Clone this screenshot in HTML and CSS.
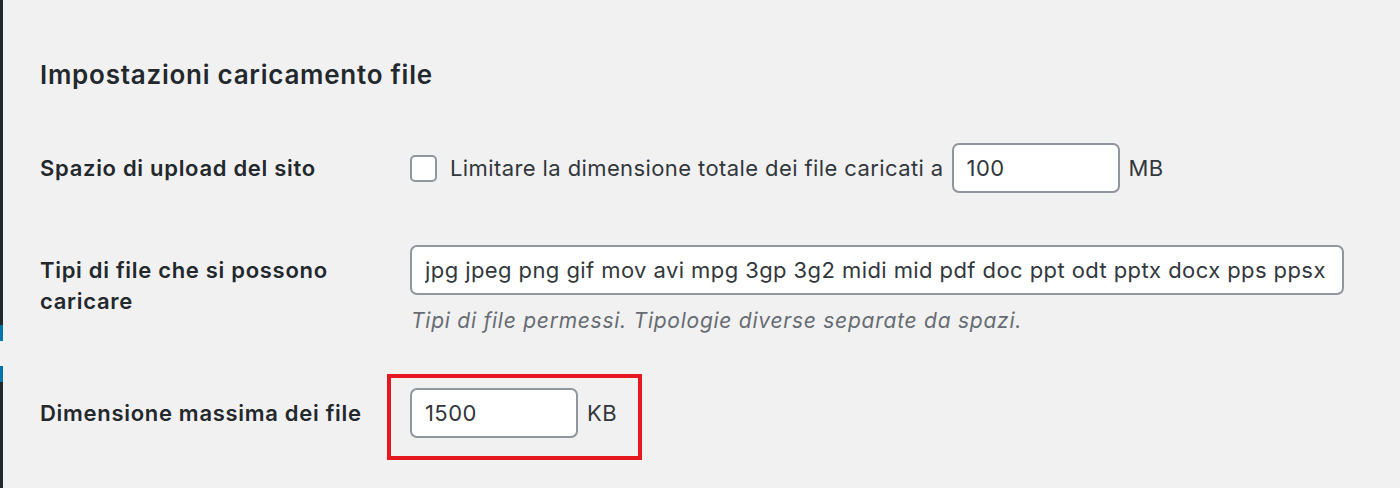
FILE: index.html
```html
<!DOCTYPE html>
<html lang="it">
<head>
  <meta charset="UTF-8">
  <title>Impostazioni caricamento file</title>
  <link rel="stylesheet" href="styles.css">
</head>
<body>
  <div class="adminmenu">
    <div class="menu-dark menu-top"></div>
    <div class="menu-blue"></div>
    <div class="menu-gap"></div>
    <div class="menu-blue"></div>
    <div class="menu-dark menu-bottom"></div>
  </div>

  <div class="wrap">
    <h2>Impostazioni caricamento file</h2>

    <div class="form-row">
      <div class="label">Spazio di upload del sito</div>
      <div class="field">
        <input type="checkbox" class="check">
        <span>Limitare la dimensione totale dei file caricati a</span>
        <input type="text" class="small-text gap-left" value="100">
        <span class="unit">MB</span>
      </div>
    </div>

    <div class="form-row">
      <div class="label">Tipi di file che si possono caricare</div>
      <div class="field-col">
        <input type="text" class="wide-text" value="jpg jpeg png gif mov avi mpg 3gp 3g2 midi mid pdf doc ppt odt pptx docx pps ppsx">
        <p class="description">Tipi di file permessi. Tipologie diverse separate da spazi.</p>
      </div>
    </div>

    <div class="form-row">
      <div class="label">Dimensione massima dei file</div>
      <div class="field">
        <div class="highlight">
          <input type="text" class="small-text" value="1500">
          <span class="unit">KB</span>
        </div>
      </div>
    </div>
  </div>
</body>
</html>
```

FILE: styles.css
```css
body {
  margin: 0;
  background: #f1f1f1;
  color: #32373c;
  font-family: Inter, 'Liberation Sans', sans-serif;
  font-size: 22px;
  letter-spacing: 0.4px;
  display: flex;
  min-height: 488px;
  overflow: hidden;
}
.adminmenu {
  width: 3px;
  display: flex;
  flex-direction: column;
  flex-shrink: 0;
}
.menu-dark {
  background: #23282d;
}
.menu-top {
  height: 325px;
}
.menu-bottom {
  flex: 1;
}
.menu-blue {
  height: 16px;
  background: #0073aa;
}
.menu-gap {
  height: 25px;
}
.wrap {
  padding-left: 37px;
  flex: 1;
}
h2 {
  margin: 58px 0 0;
  font-size: 26px;
  line-height: 34px;
  font-weight: 600;
  letter-spacing: 0.75px;
  color: #23282d;
}
.form-row {
  display: grid;
  grid-template-columns: 370px 1fr;
  margin-top: 52px;
}
h2 + .form-row {
  margin-top: 51px;
}
.label {
  padding-top: 10px;
  width: 340px;
  font-weight: 600;
  letter-spacing: 0.7px;
  line-height: 31px;
  color: #23282d;
}
.field {
  display: flex;
  align-items: center;
  height: 50px;
}
.field-col {
  display: flex;
  flex-direction: column;
}
.check {
  appearance: none;
  -webkit-appearance: none;
  margin: 0 13px 0 0;
  width: 27px;
  height: 27px;
  border: 2px solid #8f969d;
  border-radius: 5px;
  background: #fff;
  box-sizing: border-box;
}
input[type=text] {
  font-family: inherit;
  font-size: 22px;
  letter-spacing: 0.42px;
  color: #32373c;
  height: 50px;
  box-sizing: border-box;
  border: 2px solid #8f969d;
  border-radius: 7px;
  background: #fff;
  padding: 0 6px 0 13px;
  margin: 0;
  outline: none;
}
.small-text {
  width: 168px;
}
.gap-left {
  margin-left: 8px !important;
}
.wide-text {
  width: 934px;
}
.unit {
  margin-left: 9px;
}
.description {
  margin: 11px 0 0 1px;
  font-size: 21px;
  letter-spacing: 0.75px;
  line-height: 30px;
  font-style: italic;
  color: #666c72;
}
.highlight {
  display: flex;
  align-items: center;
  border: 4px solid #e5171f;
  padding: 10px 21px 18px 19px;
  margin: -14px 0 -22px -23px;
}
```
